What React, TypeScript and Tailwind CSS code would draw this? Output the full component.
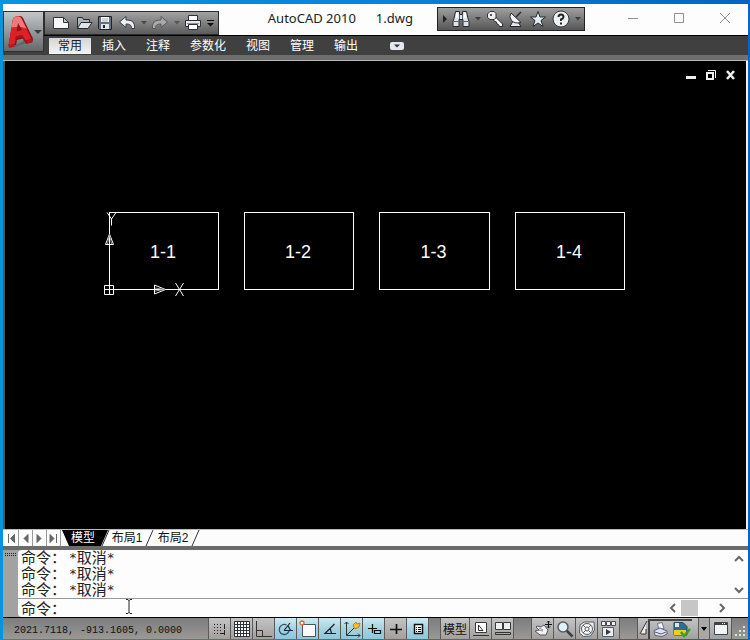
import type { ReactNode } from "react"

const ribbonTabs = ["常用", "插入", "注释", "参数化", "视图", "管理", "输出"]
const history = ["取消", "取消", "取消"]

const frames = [
  { label: "1-1", x: 104, w: 110 },
  { label: "1-2", x: 239, w: 110 },
  { label: "1-3", x: 374, w: 111 },
  { label: "1-4", x: 510, w: 110 },
]

function Icon({ w = 18, h = 18, children }: { w?: number; h?: number; children: ReactNode }) {
  return (
    <svg width={w} height={h} viewBox={`0 0 ${w} ${h}`} fill="none" className="block shrink-0" aria-hidden="true">
      {children}
    </svg>
  )
}

function Caret({ color = "#3c3c3c" }: { color?: string }) {
  return (
    <Icon w={6} h={4}>
      <path d="M0 0h6L3 3.500z" fill={color} />
    </Icon>
  )
}

function ToolButton({ label, className = "", children }: { label: string; className?: string; children: ReactNode }) {
  return (
    <button aria-label={label} className={`flex shrink-0 items-center justify-center ${className}`}>
      {children}
    </button>
  )
}

function AppButton() {
  return (
    <button
      aria-label="应用程序菜单"
      className="absolute left-0 top-[7px] flex h-[41px] w-[41px] items-center border border-[#303030] bg-gradient-to-b from-[#c4c7c9] via-[#96999b] to-[#66696b] pl-1"
    >
      <Icon w={26} h={34}>
        <path d="M3 33 12 30l13-3v-4l-5-8-6 12z" fill="#4a4c4e" opacity="0.5" />
        <path d="M0.500 31 5 4q.5-2 3-2.500l4-.5q2 0 3 2l10 21-1 3-6 1.500-3-5-6 1.500-1 5z" fill="#8a0f14" />
        <path d="M0.500 30 5 4q.5-2 3-2.500h3q1.500 0 2.500 2l10 20.500-6 1.500-3.500-5.500-5.500 1.500-2 8z" fill="#dc2228" />
        <path d="M5 4q.5-2 3-2.500h3q1.500 0 2.500 2l5 10q-7-3-15-1z" fill="#f07a7a" />
        <path d="M8.500 16.500 10 8l4 7z" fill="#8d1216" />
        <path d="M7.500 21.500 14 20l1.500 2-8.500 2.500z" fill="#a3151a" />
        <path d="M.5 29.500 6 29.500l1 2L1 33zM18 25.500l5-1.500 2 1-1 2.500-5 1.500z" fill="#b5181d" />
      </Icon>
      <Icon w={8} h={4}>
        <path d="M0 0h8L4 4z" fill="#333a40" />
      </Icon>
    </button>
  )
}

function QuickAccess() {
  return (
    <div className="mt-[7px] flex h-6 w-[175px] shrink-0 items-center justify-between border border-[#2c2c2c] bg-gradient-to-b from-[#a2a2a2] via-[#808080] to-[#5c5c5c] pl-[7px] pr-[3px]">
      <ToolButton label="新建">
        <Icon>
          <path d="M1.500 3.500h10l5 5v6h-15z" fill="#f8f8f8" stroke="#30343a" />
          <path d="M11.500 3.500v5h5z" fill="#c9cdd2" stroke="#30343a" />
        </Icon>
      </ToolButton>
      <ToolButton label="打开">
        <Icon>
          <path d="M2.500 14V3.500h5l1 2h6V8" fill="#aeb4ba" stroke="#24282c" />
          <path d="M2.500 14.500 6 8.500h11l-4 6z" fill="#e0e4e8" stroke="#24282c" />
        </Icon>
      </ToolButton>
      <ToolButton label="保存">
        <Icon w={16}>
          <path d="M1.500 2.500h13v13h-12l-1-1z" fill="#66707c" stroke="#20242a" />
          <path d="M4 3h8v5H4z" fill="#fff" />
          <path d="M5 5h6M5 7h6" stroke="#9aa" />
          <path d="M4 10h8v5H4z" fill="#dfe5ea" />
          <path d="M6 11h2v3H6z" fill="#20242a" />
        </Icon>
      </ToolButton>
      <ToolButton label="放弃">
        <Icon>
          <path d="M1.500 8 8 2.500V6c6 0 9 2 8.500 8.500h-3C13.500 11 12 10 8 10v3.500z" fill="#eef1f4" stroke="#343a40" />
        </Icon>
      </ToolButton>
      <Caret color="#4a4a4a" />
      <ToolButton label="重做">
        <Icon>
          <path d="M16.500 8 10 2.500V6c-6 0-9 2-8.500 8.500h3C4.500 11 6 10 10 10v3.500z" fill="#a7a9ab" stroke="#55585b" />
        </Icon>
      </ToolButton>
      <Caret color="#565656" />
      <ToolButton label="打印">
        <Icon>
          <path d="M4.500 7V1.500h9V7" fill="#fff" stroke="#2b2f34" />
          <path d="M1.500 6.500h15v6h-15z" fill="#e4e7ea" stroke="#2b2f34" />
          <path d="M3 9.500h12" stroke="#8b9198" />
          <path d="M4.500 10.500h9v5h-9z" fill="#fff" stroke="#2b2f34" />
        </Icon>
      </ToolButton>
      <ToolButton label="自定义快速访问工具栏">
        <Icon w={8} h={8}>
          <path d="M0 1.500h7" stroke="#111" />
          <path d="M0 4h7L3.500 7.500z" fill="#111" />
        </Icon>
      </ToolButton>
    </div>
  )
}

function InfoCenter() {
  return (
    <div className="mt-[3px] flex h-6 w-[148px] shrink-0 items-center justify-between border border-[#222] bg-gradient-to-b from-[#a0a0a0] via-[#7a7a7a] to-[#565656] pl-[5px] pr-[3px]">
      <Icon w={4} h={8}>
        <path d="M0 0v8l4-4z" fill="#222" />
      </Icon>
      <ToolButton label="搜索">
        <Icon>
          <path d="M3.500 1.500h4v3h3v-3h4l1.500 7 1 3v5h-6v-7h-4v7h-6v-5l1-3z" fill="#dfe4ea" stroke="#25292e" />
          <path d="M1.500 11.500h5M11.500 11.500h5M7.500 5v4M10.500 5v4" stroke="#59636e" />
          <path d="M5 3v5M13 3v5" stroke="#fff" strokeWidth="2" />
        </Icon>
      </ToolButton>
      <Caret />
      <ToolButton label="速博应用中心">
        <Icon>
          <path d="M8.500 6 16.500 14v2.500h-3l-1-2-1.500-.5-.5-2-1.500-.5L6 9z" fill="#fff" stroke="#25292e" />
          <path d="M4 1.500h4l2 2V8L8 9.500H4l-2.500-2V4z" fill="#eceef0" stroke="#30353b" />
          <path d="M4 4h2v2H4z" fill="#50565e" />
        </Icon>
      </ToolButton>
      <ToolButton label="通讯中心">
        <Icon w={16}>
          <path d="M5 11l-3 5.500h11L10 12z" fill="#e6e9ec" stroke="#25292e" />
          <path d="M3 3Q.5 7 3.500 10.500T13 12.500z" fill="#f4f6f8" stroke="#25292e" />
          <path d="M8 7l5-5" stroke="#25292e" strokeWidth="1.500" />
        </Icon>
      </ToolButton>
      <ToolButton label="收藏夹">
        <Icon>
          <path d="M9 1.500 11 7h5.500L12 10.500l2 6-5-3.500-5 3.500 2-6L1.500 7H7z" fill="#e4edf4" stroke="#25292e" />
        </Icon>
      </ToolButton>
      <ToolButton label="帮助">
        <Icon>
          <circle cx="9" cy="9" r="8" fill="#eef1f3" stroke="#30353b" />
          <path d="M6.500 7q0-2.500 2.500-2.500T11.500 7Q11.500 8.500 9 9.500v1.500M9 12.500v2" stroke="#222" strokeWidth="2" />
        </Icon>
      </ToolButton>
      <Caret />
    </div>
  )
}

function TitleBar() {
  return (
    <header className="relative">
      <div className="flex h-[31px] bg-[#fdfdfd] pl-[41px]">
        <QuickAccess />
        <h1 className="flex flex-1 justify-end gap-5 whitespace-pre pr-6 pt-1.5 font-['Noto_Sans','Noto_Sans_CJK_SC',sans-serif] text-[13px] leading-4 text-[#222]">
          <span>AutoCAD 2010</span>
          <span>1.dwg</span>
        </h1>
        <InfoCenter />
        <div className="flex w-[163px] shrink-0 items-start justify-end gap-6 pr-3 pt-[3px]">
          <ToolButton label="最小化" className="h-[22px] w-[22px]">
            <Icon w={12} h={12}>
              <path d="M1 6.500h10" stroke="#919191" />
            </Icon>
          </ToolButton>
          <ToolButton label="最大化" className="h-[22px] w-[22px]">
            <Icon w={12} h={12}>
              <path d="M1.500 1.500h9v9h-9z" stroke="#919191" />
            </Icon>
          </ToolButton>
          <ToolButton label="关闭" className="h-[22px] w-[22px]">
            <Icon w={12} h={12}>
              <path d="M1 1l10 10M11 1 1 11" stroke="#919191" />
            </Icon>
          </ToolButton>
        </div>
      </div>
      <nav className="flex h-5 items-center border-t border-black bg-[#404040] pl-[45px] text-xs text-white">
        {ribbonTabs.map((tab, i) => (
          <button
            key={tab}
            className={`mx-px flex h-4 items-center px-[9px] leading-4 ${
              i === 0 ? "bg-gradient-to-b from-[#d5d5d5] to-[#f4f4f4] text-[#222]" : ""
            }`}
          >
            {tab}
          </button>
        ))}
        <ToolButton label="最小化功能区" className="ml-[22px]">
          <Icon w={14} h={8}>
            <rect width="14" height="8" rx="2" fill="#e3e8f2" />
            <path d="M4 2.500h6L7 5.500z" fill="#333" />
          </Icon>
        </ToolButton>
      </nav>
      <AppButton />
    </header>
  )
}

function DrawingArea() {
  return (
    <main className="relative flex min-h-[260px] flex-1 border-l-2 border-r-2 border-l-[#555] border-r-[#f0f0f0] bg-black">
      <svg className="w-full flex-1" fill="none" stroke="#fff">
        {frames.map((f) => (
          <g key={f.label}>
            <rect x={f.x + 0.5} y="151.500" width={f.w - 1} height="77" />
            <text
              x={f.x + f.w / 2 - 1}
              y="197"
              textAnchor="middle"
              fill="#fff"
              stroke="none"
              className="font-['Liberation_Sans',sans-serif] text-lg"
            >
              {f.label}
            </text>
          </g>
        ))}
        {/* UCS icon */}
        <path d="M99.500 224.500h9v9h-9zM99 228.500h10M104.500 224v10" />
        <path d="M104.500 173 100.500 183.500h8z" />
        <path d="M104.500 173 102.500 183M104.500 173 106.500 183" stroke="#999" />
        <path d="M160.500 228.500 149.500 224v9z" />
        <path d="M160 228.500l-10-1.500M160 228.500l-10 1.500" stroke="#999" />
        <path d="M102 151.500l4.500 6.500 4.500-6.500M106.500 158v6.500" />
        <path d="M170.500 222l8 13M178.500 222l-8 13" />
      </svg>
      <div className="absolute right-[9px] top-2 flex gap-2">
        <ToolButton label="最小化图形">
          <Icon w={12} h={12}>
            <path d="M1 7h10v3H1z" fill="#eee" />
          </Icon>
        </ToolButton>
        <ToolButton label="还原图形">
          <Icon w={12} h={12}>
            <path d="M2 4h6v6H2z" stroke="#eee" strokeWidth="2" />
            <path d="M3 1.500h7.500V9" stroke="#eee" />
          </Icon>
        </ToolButton>
        <ToolButton label="关闭图形">
          <Icon w={12} h={12}>
            <path d="M2 2l7 8M9 2l-7 8" stroke="#eee" strokeWidth="2.500" />
          </Icon>
        </ToolButton>
      </div>
    </main>
  )
}

const navArrows = [
  { label: "第一个布局", d: "M3.500 3v9M9.500 3.500v8L5.500 7.500z" },
  { label: "上一个布局", d: "M9 3.500v8L5 7.500z" },
  { label: "下一个布局", d: "M4 3.500v8l4-4z" },
  { label: "最后一个布局", d: "M3 3.500v8l4-4zM9.500 3v9" },
]

function LayoutTabs() {
  return (
    <div className="flex h-[17px] items-stretch border-t border-[#bbb] bg-[#fcfcfc] pl-0.5 text-xs leading-[15px] text-[#111]">
      {navArrows.map((a) => (
        <ToolButton key={a.label} label={a.label} className="w-[14px] border-r border-[#999]">
          <Icon w={13} h={15}>
            <path d={a.d} fill="#666" stroke="#666" />
          </Icon>
        </ToolButton>
      ))}
      <div className="relative ml-px flex">
        <svg width="142" height="16" className="absolute left-0 top-0" aria-hidden="true">
          <path d="M0 0h46l-7 16H7z" fill="#000" />
          <path d="M47 0l-7 16M91 0l-7 16M137 0l-7 16" stroke="#333" />
        </svg>
        <button className="relative w-[42px] text-white">模型</button>
        <button className="relative w-[46px]">布局1</button>
        <button className="relative w-[46px]">布局2</button>
      </div>
    </div>
  )
}

function Chevron({ d }: { d: string }) {
  return (
    <Icon w={10} h={10}>
      <path d={d} stroke="#666" strokeWidth="2" />
    </Icon>
  )
}

function Star() {
  return <span className="font-['DejaVu_Sans_Mono',monospace] text-[13px]">*</span>
}

function CommandWindow() {
  return (
    <section className="flex border-t-4 border-[#6b6b6b] bg-[#a2a2a2] pl-0.5 text-[15px] text-[#222]">
      <div className="w-[13px] shrink-0 pt-0.5">
        <Icon w={12} h={5}>
          <path d="M0 1.500h12M0 3.500h12" stroke="#222" strokeDasharray="1 1" />
        </Icon>
      </div>
      <div className="flex-1 rounded-l bg-[#fdfdfd]">
        <div className="flex h-[49px] justify-between border-b border-[#999] pl-[3px]">
          <div className="leading-4">
            {history.map((line, i) => (
              <p key={i} className="flex h-4">
                <span className="w-12">命令：</span>
                <Star />
                <span>{line}</span>
                <Star />
              </p>
            ))}
          </div>
          <div className="flex w-[18px] flex-col items-center justify-between pb-[3px] pt-1">
            <ToolButton label="向上滚动">
              <Chevron d="M1 7l4-4 4 4" />
            </ToolButton>
            <ToolButton label="向下滚动">
              <Chevron d="M1 3l4 4 4-4" />
            </ToolButton>
          </div>
        </div>
        <div className="relative flex h-[18px] items-center pl-[3px]">
          <label htmlFor="command" className="self-end leading-4">
            命令：
          </label>
          <input id="command" className="h-4 min-w-0 flex-1 bg-transparent outline-none" />
          <svg width="8" height="16" className="absolute left-[107px] top-0" fill="none" stroke="#222" aria-hidden="true">
            <path d="M1 .5h2l1 1 1-1h2M4 1v13M1 14.500h2l1-1 1 1h2" />
          </svg>
          <div className="flex w-[80px] shrink-0 items-center">
            <ToolButton label="向左滚动">
              <Chevron d="M7 1 3 5l4 4" />
            </ToolButton>
            <div className="ml-[3px] h-4 w-[17px] bg-[#c6c6c6]" />
            <ToolButton label="向右滚动" className="ml-[19px]">
              <Chevron d="M3 1l4 4-4 4" />
            </ToolButton>
          </div>
        </div>
      </div>
    </section>
  )
}

const toggles = [
  {
    label: "捕捉",
    on: false,
    art: (
      <>
        <path d="M3 4.500h9M3 7.500h9M3 10.500h7M3 13.500h7" stroke="#222" strokeDasharray="1 2" />
        <path d="M13.500 4v11M9 13.500h4" stroke="#222" strokeDasharray="5 1" />
      </>
    ),
  },
  {
    label: "栅格",
    on: false,
    art: (
      <>
        <path d="M1.500 1.500h15v15h-15z" fill="#fff" />
        <path d="M1.500 1.500h15v15h-15zM4.500 1v15M7.500 1v15M10.500 1v15M13.500 1v15M1 4.500h15M1 7.500h15M1 10.500h15M1 13.500h15" stroke="#2c323a" />
      </>
    ),
  },
  { label: "正交", on: false, art: <path d="M1.500 1v15.500H17M2 10.500h5.500v6" stroke="#333" /> },
  {
    label: "极轴",
    on: true,
    art: (
      <>
        <path d="M9.500 5A5 5 0 1 0 12 11" stroke="#34506e" strokeWidth="1.300" />
        <path d="M7 10.500h9M7 10.500l6-7.500M11 5.500l2.500 5" stroke="#1a2430" strokeWidth="1.200" />
      </>
    ),
  },
  {
    label: "对象捕捉",
    on: true,
    art: (
      <>
        <path d="M3.500 4.500h13v12h-13z" fill="#f8f8f8" stroke="#4f535a" />
        <circle cx="3" cy="3" r="2" fill="#fff" stroke="#f15a24" strokeWidth="1.300" />
      </>
    ),
  },
  { label: "对象追踪", on: true, art: <path d="M13.500 4 4 13.500h11M7.500 9.500h2l1 4" stroke="#222" strokeWidth="1.200" /> },
  {
    label: "动态 UCS",
    on: true,
    art: (
      <>
        <path d="M3.500 2v13.500H17M1.500 4l2-2 2 2M15 13.500l2 2-2 2M4 15l7-7" stroke="#333" />
        <path d="M10 5l3-3 1 2 3-1-1 4-4 2z" fill="#ffbe24" stroke="#d77b00" />
      </>
    ),
  },
  { label: "动态输入", on: true, art: <path d="M3 8.500h9M7.500 4v9M9.500 10.500h6v3h-6z" stroke="#111" strokeWidth="1.200" /> },
  { label: "线宽", on: false, art: <path d="M3 9.500h6.500M9.500 9.500H15M9.500 4v10" stroke="#111" strokeWidth="1.700" /> },
  {
    label: "快捷特性",
    on: true,
    art: (
      <>
        <path d="M5.500 4.500h8v9h-8z" fill="#fff" stroke="#111" strokeWidth="1.500" />
        <path d="M7 7.500h1M9 7.500h3M7 9.500h1M9 9.500h3M7 11.500h1M9 11.500h3" stroke="#111" />
      </>
    ),
  },
]

const viewTools = [
  {
    label: "平移",
    art: (
      <>
        <path d="M3 6l4 1 3-2 4 5-2 5H6l-5-4 4-1-3-3z" fill="#f2f2f2" stroke="#50565e" />
        <path d="M5 8l4 2M5 10l4 1" stroke="#8b9299" />
        <path d="M14.500 1v7M11 4.500h7M13 2.500l1.500-1.500L16 2.500M13 6.500l1.500 1.500L16 6.500" stroke="#111" />
      </>
    ),
  },
  {
    label: "缩放",
    art: (
      <>
        <path d="M10.500 10.500l6 6" stroke="#3a4048" strokeWidth="2.500" />
        <circle cx="7" cy="7" r="5" fill="#dff1fb" stroke="#555c64" strokeWidth="1.500" />
      </>
    ),
  },
  {
    label: "控制盘",
    art: (
      <>
        <path d="M2 5l4-3h10l.5 8-4 6-7 .5L1.500 13z" fill="#eee" stroke="#555c64" />
        <circle cx="9" cy="9" r="5.500" fill="#f8f8f8" stroke="#555c64" />
        <circle cx="9" cy="9" r="2" stroke="#555c64" />
        <path d="M5 5l2.500 2.500M13 5l-2.500 2.500M5 13l2.500-2.500M13 13l-2.500-2.500" stroke="#555c64" />
      </>
    ),
  },
  {
    label: "动画",
    art: (
      <>
        <path d="M1.500 1.500h4v4h-4zM6.500 1.500h4v4h-4zM11.500 1.500h4v4h-4z" fill="#f2f2f2" stroke="#444b53" />
        <path d="M2.500 7.500h11v9h-11z" fill="#eee" stroke="#555c64" />
        <path d="M6 9v6l5-3z" fill="#333a42" />
      </>
    ),
  },
]

const cell = "h-[21px] w-[22px] border-r border-[#5a5a5a]"
const cellGray = "bg-gradient-to-b from-[#c4c4c4] to-[#a0a0a0]"

function StatusBar() {
  return (
    <footer className="flex h-[22px] overflow-hidden border-t border-black bg-gradient-to-b from-[#7d7d7d] to-[#999]">
      <output className="flex w-[205px] shrink-0 items-center whitespace-pre pl-[11px] pt-1 font-['Liberation_Mono',monospace] text-[10px] text-[#111]">
        2021.7118, -913.1605, 0.0000
      </output>
      <div className="flex border-l border-[#5a5a5a]">
        {toggles.map((t) => (
          <button
            key={t.label}
            aria-label={t.label}
            aria-pressed={t.on}
            className={`flex shrink-0 items-center justify-center ${cell} ${
              t.on ? "bg-gradient-to-b from-[#cdeaf2] via-[#a4d3e0] to-[#91c6d6]" : cellGray
            }`}
          >
            <Icon>{t.art}</Icon>
          </button>
        ))}
      </div>
      <div className="ml-[11px] flex border-l border-[#5a5a5a]">
        <button className={`h-[21px] w-[29px] shrink-0 border-r border-[#5a5a5a] pt-0.5 text-xs text-[#111] ${cellGray}`}>
          模型
        </button>
        <ToolButton label="快速查看布局" className={`${cell} ${cellGray}`}>
          <Icon>
            <path d="M3.500 2.500h11v10h-11z" fill="#fff" stroke="#333a42" />
            <path d="M6.500 5v5.500H11z" stroke="#333" />
            <path d="M1 15.500h16" stroke="#333" />
          </Icon>
        </ToolButton>
        <ToolButton label="快速查看图形" className={`${cell} ${cellGray}`}>
          <Icon>
            <path d="M1.500 2.500h7v7h-7zM9.500 2.500h7v7h-7z" fill="#eee" stroke="#333a42" />
            <path d="M1.500 12.500h15v2h-15z" fill="#aaa" stroke="#333" />
          </Icon>
        </ToolButton>
      </div>
      <div className="ml-[17px] flex border-l border-[#5a5a5a]">
        {viewTools.map((t) => (
          <ToolButton key={t.label} label={t.label} className={`${cell} ${cellGray}`}>
            <Icon>{t.art}</Icon>
          </ToolButton>
        ))}
      </div>
      <div className="ml-auto flex border-l border-[#5a5a5a]">
        <div className={`flex h-[21px] w-[60px] items-center ${cellGray}`}>
          <Icon w={10}>
            <path d="M9 1 2 14h6V5z" fill="#eee" />
            <path d="M9 1 2 14M8 9v5H3" stroke="#333" />
          </Icon>
          <div className="mt-px flex h-5 w-11 items-center justify-around border-l-2 border-t-2 border-[#444]">
            <Icon>
              <path d="M5.500 2.500 10 1.500l2 6-5 2z" fill="#f4f4ff" stroke="#697096" />
              <path d="M2 9.500 8 7l7 3v3l-5 2.500-7-1z" fill="#dde0ee" stroke="#565e80" />
              <path d="M3 11l6 2 5-2" stroke="#565e80" />
            </Icon>
            <Icon>
              <path d="M1 1.500h9l4 4V14H1z" fill="#2f6c9c" stroke="#274766" />
              <path d="M2 2h4v4H2z" fill="#d8e8f2" />
              <path d="M1 9h12v5H1z" fill="#f2ca22" />
              <path d="M8 11l3 4 6-7" stroke="#37a31e" strokeWidth="2.500" />
            </Icon>
          </div>
        </div>
        <ToolButton label="状态栏菜单" className="h-[21px] w-3 border-x border-[#5a5a5a] bg-[#a8a8a8]">
          <Icon w={6} h={4}>
            <path d="M0 0h6L3 4z" fill="#000" />
          </Icon>
        </ToolButton>
        <ToolButton label="全屏显示" className={`${cell} ${cellGray}`}>
          <Icon>
            <path d="M2.500 2.500h13v12h-13z" fill="#f4f4f4" stroke="#3d434a" />
            <path d="M3 4h12" stroke="#3d434a" strokeWidth="2" />
            <path d="M10 3.500h4" stroke="#fff" strokeDasharray="1 1" />
          </Icon>
        </ToolButton>
        <div className="flex w-4 items-end justify-center pb-px">
          <Icon w={12} h={12}>
            <path d="M9 0h2v2H9zM5 4h2v2H5zM9 4h2v2H9zM1 8h2v2H1zM5 8h2v2H5zM9 8h2v2H9z" fill="#e4e2d5" />
          </Icon>
        </div>
      </div>
    </footer>
  )
}

export default function App() {
  return (
    <div className="flex min-h-screen flex-col bg-gradient-to-r from-[#0795e2] via-[#0783de] to-[#0763c4] pb-px pl-[3px] pr-0.5 pt-1 font-['Liberation_Sans','Noto_Sans_CJK_SC',sans-serif]">
      <TitleBar />
      <div className="h-1.5 border-b border-[#b8b8b8] bg-[#6e6e6e]" />
      <DrawingArea />
      <LayoutTabs />
      <CommandWindow />
      <StatusBar />
    </div>
  )
}
